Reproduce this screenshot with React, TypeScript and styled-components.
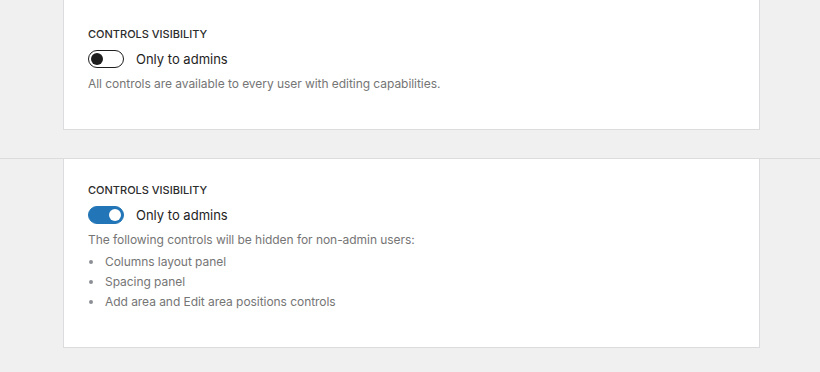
import styled, { createGlobalStyle } from "styled-components";

const GlobalStyle = createGlobalStyle`
    body {
        margin: 0;
        background-color: #f0f0f1;
        font-family: Inter, "Noto Sans", sans-serif;
        -webkit-font-smoothing: antialiased;
    }
`;

const Page = styled.div`
    width: 820px;
    height: 372px;
    overflow: hidden;
`;

const Section = styled.div`
    padding-left: 63px;
`;

const Panel = styled.div<{ $top: number; $bottom: number; $capped?: boolean }>`
    width: 697px;
    box-sizing: border-box;
    background-color: #ffffff;
    border: 1px solid #dcdcde;
    border-top: ${({ $capped }) => ($capped ? "none" : "1px solid #dcdcde")};
    padding: ${({ $top, $bottom }) => `${$top}px 24px ${$bottom}px`};
`;

const Divider = styled.div`
    height: 1px;
    margin-top: 28px;
    background-color: #dcdcde;
`;

const Heading = styled.h3`
    margin: 0 0 9px;
    font-size: 11px;
    line-height: 14px;
    font-weight: 500;
    text-transform: uppercase;
    color: #2c2c2c;
`;

const ToggleRow = styled.label`
    display: flex;
    align-items: center;
    gap: 12px;
    height: 18px;
`;

const Track = styled.span<{ $on: boolean }>`
    position: relative;
    width: 36px;
    height: 18px;
    box-sizing: border-box;
    border-radius: 9px;
    border: 1px solid ${({ $on }) => ($on ? "#2275b6" : "#1e1e1e")};
    background-color: ${({ $on }) => ($on ? "#2275b6" : "#ffffff")};
`;

const Knob = styled.span<{ $on: boolean }>`
    position: absolute;
    top: 2px;
    left: ${({ $on }) => ($on ? "20px" : "2px")};
    width: 12px;
    height: 12px;
    border-radius: 50%;
    background-color: ${({ $on }) => ($on ? "#ffffff" : "#1e1e1e")};
`;

const ToggleLabel = styled.span`
    font-size: 13px;
    line-height: 18px;
    color: #1e1e1e;
`;

const Help = styled.p`
    margin: 8px 0 0;
    font-size: 12px;
    line-height: 16px;
    letter-spacing: -0.05px;
    color: #757575;
`;

const List = styled.ul`
    margin: 4px 0 0;
    padding: 0;
    list-style: none;
`;

const Item = styled.li`
    display: flex;
    align-items: center;
    gap: 12px;
    font-size: 12px;
    line-height: 20px;
    letter-spacing: -0.05px;
    color: #757575;
    &::before {
        content: "";
        width: 4px;
        height: 4px;
        margin-left: 1px;
        border-radius: 50%;
        background-color: #8c8f94;
    }
`;

const Toggle = ({ on, label }: { on: boolean; label: string }) => (
    <ToggleRow>
        <Track $on={on}>
            <Knob $on={on} />
        </Track>
        <ToggleLabel>{label}</ToggleLabel>
    </ToggleRow>
);

const hiddenControls = [
    "Columns layout panel",
    "Spacing panel",
    "Add area and Edit area positions controls",
];

const App = () => {
    return (
        <>
            <GlobalStyle />
            <Page>
                <Section>
                    <Panel $top={27} $bottom={37} $capped>
                        <Heading>Controls visibility</Heading>
                        <Toggle on={false} label="Only to admins" />
                        <Help>All controls are available to every user with editing capabilities.</Help>
                    </Panel>
                </Section>
                <Divider />
                <Section>
                    <Panel $top={24} $bottom={35} $capped>
                        <Heading>Controls visibility</Heading>
                        <Toggle on label="Only to admins" />
                        <Help>The following controls will be hidden for non-admin users:</Help>
                        <List>
                            {hiddenControls.map((item) => (
                                <Item key={item}>{item}</Item>
                            ))}
                        </List>
                    </Panel>
                </Section>
            </Page>
        </>
    );
};

export default App;
